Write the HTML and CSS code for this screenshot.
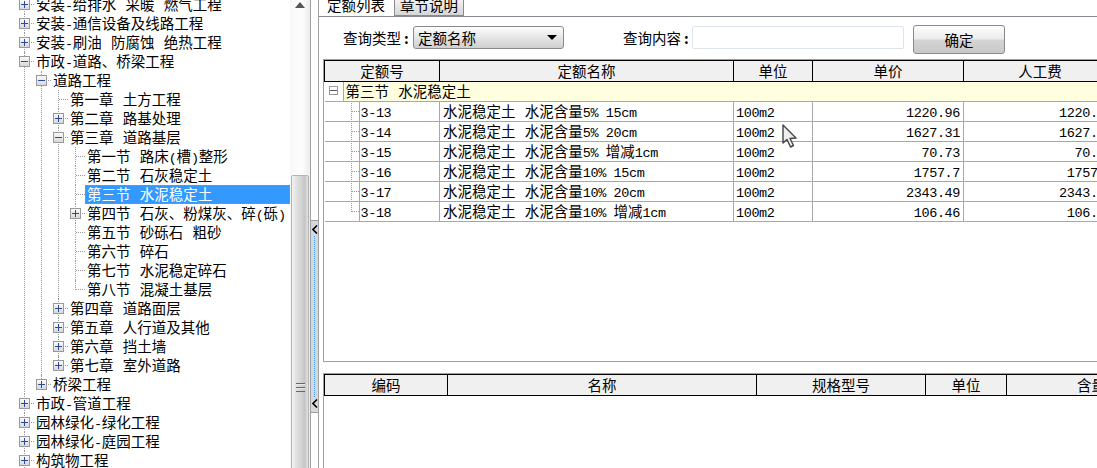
FILE: index.html
```html
<!DOCTYPE html>
<html lang="zh-CN">
<head>
  <meta charset="UTF-8" />
  <meta name="viewport" content="width=device-width, initial-scale=1" />
  <title>定额列表</title>
  <link rel="stylesheet" href="styles.css">
</head>
<body>
<div class="app">

  <!-- left: chapter tree -->
  <div class="tree-pane">
    <ul class="tree">
      <li><span class="exp"></span><div class="row">安装<span class="lat">-</span>给排水 采暖 燃气工程</div></li>
      <li><span class="exp"></span><div class="row">安装<span class="lat">-</span>通信设备及线路工程</div></li>
      <li><span class="exp"></span><div class="row">安装<span class="lat">-</span>刷油 防腐蚀 绝热工程</div></li>
      <li><span class="exp open"></span><div class="row">市政<span class="lat">-</span>道路、桥梁工程</div>
        <ul>
          <li><span class="exp open"></span><div class="row">道路工程</div>
            <ul>
              <li><div class="row">第一章 土方工程</div></li>
              <li><span class="exp"></span><div class="row">第二章 路基处理</div></li>
              <li><span class="exp open"></span><div class="row">第三章 道路基层</div>
                <ul>
                  <li><div class="row">第一节 路床<span class="lat">(</span>槽<span class="lat">)</span>整形</div></li>
                  <li><div class="row">第二节 石灰稳定土</div></li>
                  <li><div class="row selected">第三节 水泥稳定土</div></li>
                  <li><span class="exp"></span><div class="row">第四节 石灰、粉煤灰、碎<span class="lat">(</span>砾<span class="lat">)</span></div></li>
                  <li><div class="row">第五节 砂砾石 粗砂</div></li>
                  <li><div class="row">第六节 碎石</div></li>
                  <li><div class="row">第七节 水泥稳定碎石</div></li>
                  <li class="end"><div class="row">第八节 混凝土基层</div></li>
                </ul>
              </li>
              <li><span class="exp"></span><div class="row">第四章 道路面层</div></li>
              <li><span class="exp"></span><div class="row">第五章 人行道及其他</div></li>
              <li><span class="exp"></span><div class="row">第六章 挡土墙</div></li>
              <li class="end"><span class="exp"></span><div class="row">第七章 室外道路</div></li>
            </ul>
          </li>
          <li class="end"><span class="exp"></span><div class="row">桥梁工程</div></li>
        </ul>
      </li>
      <li><span class="exp"></span><div class="row">市政<span class="lat">-</span>管道工程</div></li>
      <li><span class="exp"></span><div class="row">园林绿化<span class="lat">-</span>绿化工程</div></li>
      <li><span class="exp"></span><div class="row">园林绿化<span class="lat">-</span>庭园工程</div></li>
      <li><span class="exp"></span><div class="row">构筑物工程</div></li>
    </ul>
  </div>

  <div class="scrollbar">
    <div class="scroll-up"></div>
    <div class="scroll-thumb"><div class="grip"></div></div>
  </div>

  <div class="splitter">
    <div class="split-btn">
      <svg class="chevron" width="6" height="9" viewBox="0 0 6 9"><path d="M5 0.5 L1 4.5 L5 8.5" fill="none" stroke="#000" stroke-width="1.6"/></svg>
      <div class="split-dots"></div>
      <svg class="chevron" width="6" height="9" viewBox="0 0 6 9"><path d="M5 0.5 L1 4.5 L5 8.5" fill="none" stroke="#000" stroke-width="1.6"/></svg>
    </div>
  </div>

  <!-- right: query bar and the two grids -->
  <div class="content">
    <div class="tabs">
      <div class="tab active">定额列表</div>
      <div class="tab">章节说明</div>
    </div>

    <div class="query">
      <label class="query-label">查询类型<span class="colon">:</span></label>
      <div class="select">定额名称<span class="select-arrow"></span></div>
      <label class="query-label second">查询内容<span class="colon">:</span></label>
      <input class="query-input" type="text" />
      <button class="query-btn">确定</button>
    </div>

    <div class="grid-box top-grid">
      <table class="grid">
        <colgroup>
          <col class="c-no"><col class="c-name"><col class="c-unit"><col class="c-price"><col class="c-labor">
        </colgroup>
        <thead>
          <tr><th>定额号</th><th>定额名称</th><th>单位</th><th>单价</th><th>人工费</th></tr>
        </thead>
        <tbody>
          <tr class="group">
            <td colspan="5"><span class="group-exp"></span><div class="group-title">第三节 水泥稳定土</div></td>
          </tr>
          <tr>
            <td class="no"><span class="lat">3-13</span></td>
            <td>水泥稳定土 水泥含量<span class="lat">5% 15cm</span></td>
            <td class="unit"><span class="lat">100m2</span></td>
            <td class="num"><span class="lat">1220.96</span></td>
            <td class="num"><span class="lat">1220.96</span></td>
          </tr>
          <tr>
            <td class="no"><span class="lat">3-14</span></td>
            <td>水泥稳定土 水泥含量<span class="lat">5% 20cm</span></td>
            <td class="unit"><span class="lat">100m2</span></td>
            <td class="num"><span class="lat">1627.31</span></td>
            <td class="num"><span class="lat">1627.31</span></td>
          </tr>
          <tr>
            <td class="no"><span class="lat">3-15</span></td>
            <td>水泥稳定土 水泥含量<span class="lat">5% </span>增减<span class="lat">1cm</span></td>
            <td class="unit"><span class="lat">100m2</span></td>
            <td class="num"><span class="lat">70.73</span></td>
            <td class="num"><span class="lat">70.73</span></td>
          </tr>
          <tr>
            <td class="no"><span class="lat">3-16</span></td>
            <td>水泥稳定土 水泥含量<span class="lat">10% 15cm</span></td>
            <td class="unit"><span class="lat">100m2</span></td>
            <td class="num"><span class="lat">1757.7</span></td>
            <td class="num"><span class="lat">1757.7</span></td>
          </tr>
          <tr>
            <td class="no"><span class="lat">3-17</span></td>
            <td>水泥稳定土 水泥含量<span class="lat">10% 20cm</span></td>
            <td class="unit"><span class="lat">100m2</span></td>
            <td class="num"><span class="lat">2343.49</span></td>
            <td class="num"><span class="lat">2343.49</span></td>
          </tr>
          <tr class="last">
            <td class="no"><span class="lat">3-18</span></td>
            <td>水泥稳定土 水泥含量<span class="lat">10% </span>增减<span class="lat">1cm</span></td>
            <td class="unit"><span class="lat">100m2</span></td>
            <td class="num"><span class="lat">106.46</span></td>
            <td class="num"><span class="lat">106.46</span></td>
          </tr>
        </tbody>
      </table>
    </div>

    <div class="grid-box bottom-grid">
      <table class="grid">
        <colgroup>
          <col class="d-code"><col class="d-name"><col class="d-spec"><col class="d-unit"><col class="d-qty">
        </colgroup>
        <thead>
          <tr><th>编码</th><th>名称</th><th>规格型号</th><th>单位</th><th>含量</th></tr>
        </thead>
      </table>
    </div>

    <!-- mouse pointer caught in the capture -->
    <svg class="pointer" width="16" height="25" viewBox="0 0 16 25">
      <path d="M1 1 L1 19 L5 15.5 L8.5 23 L11.5 21.5 L8 14.5 L14 14 Z" fill="#eee" stroke="#444" stroke-width="1.4" stroke-linejoin="round"/>
    </svg>
  </div>
</div>
</body>
</html>
```
FILE: styles.css
```css
* {
  box-sizing: border-box;
}
html, body {
  margin: 0;
  height: 100%;
  overflow: hidden;
  background: #fff;
}
body {
  font-family: "Noto Sans CJK SC", "Liberation Sans", sans-serif;
  font-size: 14.5px;
  word-spacing: 6px;
  color: #000;
}
.app {
  display: flex;
  height: 468px;
}
/* half-width latin runs, same advance as the simsun style grid */
.lat {
  font-family: "Liberation Mono", monospace;
  font-size: 13.5px;
  line-height: 1;
  letter-spacing: -0.4px;
  word-spacing: 0;
}

/* tree */
.tree-pane {
  width: 290px;
  flex: none;
  overflow: hidden;
}
.tree, .tree ul {
  list-style: none;
  margin: 0;
  padding: 0;
}
.tree {
  margin: -5px 0 0 17px;
}
.tree li {
  position: relative;
  padding-left: 17px;
}
.tree li::before {
  content: "";
  position: absolute;
  left: 7px;
  top: 0;
  height: 100%;
  border-left: 1px dotted #999;
}
.tree li.end::before {
  height: 10px;
}
.tree li::after {
  content: "";
  position: absolute;
  left: 8px;
  top: 9px;
  width: 9px;
  border-top: 1px dotted #999;
}
.row {
  height: 19px;
  line-height: 18px;
  padding-left: 2px;
  white-space: nowrap;
}
.row.selected {
  background: #3399ff;
  color: #fff;
  outline: 1px dotted #c68a3a;
  outline-offset: -1px;
}
.exp {
  position: absolute;
  z-index: 1;
  left: 2px;
  top: 4px;
  width: 11px;
  height: 11px;
  border: 1px solid #999;
  background: linear-gradient(#fafafa, #d8d8d8);
}
.exp::before, .exp::after {
  content: "";
  position: absolute;
  background: #2b4a9b;
}
.exp::before {
  left: 1px;
  top: 4px;
  width: 7px;
  height: 1px;
}
.exp::after {
  left: 4px;
  top: 1px;
  width: 1px;
  height: 7px;
}
.exp.open::after {
  display: none;
}

/* scrollbar */
.scrollbar {
  width: 20px;
  flex: none;
  overflow: hidden;
  background: linear-gradient(to right, #f8f8f8, #fdfdfd 60%, #ececec);
}
.scroll-up {
  width: 0;
  height: 0;
  margin: 2px 0 0 5px;
  border: 5px solid transparent;
  border-top: 0;
  border-bottom: 6px solid #555;
}
.scroll-thumb {
  width: 18px;
  height: 424px;
  margin: 167px 0 0 1px;
  display: flex;
  align-items: center;
  justify-content: center;
  border: 1px solid #b4b4b4;
  border-radius: 2px;
  background: linear-gradient(to right, #f4f4f4, #e2e2e2 25%, #d0d0d0 65%, #c4c4c4 80%, #e4e4e4);
}
.grip {
  width: 9px;
  height: 9px;
  background: repeating-linear-gradient(#666 0 1px, #e8e8e8 1px 2px, transparent 2px 4px);
}

/* splitter */
.splitter {
  width: 9px;
  flex: none;
  border-left: 1px solid #a0a0a0;
  border-right: 1px solid #a0a0a0;
  padding-top: 220px;
}
.split-btn {
  height: 193px;
  display: flex;
  flex-direction: column;
  align-items: center;
  padding: 4px 0;
  background: #d6d8dc;
  border-top: 1px solid #a0a0a0;
  border-bottom: 1px solid #a0a0a0;
}
.chevron {
  flex: none;
}
.split-dots {
  flex: 1;
  margin: 2px 0;
  border-left: 1px dotted #3f9bff;
}

/* right side */
.content {
  flex: 1;
  min-width: 0;
  position: relative;
  overflow: hidden;
  padding-left: 4px;
}
.tabs {
  display: flex;
  height: 17px;
  margin-left: -4px;
  padding-left: 4px;
  border-bottom: 1px solid #8a8a92;
}
.tab {
  height: 16px;
  line-height: 10px;
  padding: 0 4px;
  width: 70px;
  text-align: center;
}
.tab.active {
  width: 66px;
  margin-right: 5px;
}
.tab:not(.active) {
  background: linear-gradient(#f2f2f2, #d6d6d6);
  border: 1px solid #8a8a92;
  border-top: 0;
}
.query {
  display: flex;
  align-items: flex-start;
  height: 42px;
  padding: 9px 0 0 20px;
}
.query-label {
  width: 70px;
  line-height: 24px;
  white-space: nowrap;
}
.query-label.second {
  width: 70px;
  margin-left: 59px;
  margin-right: -1px;
}
.colon {
  margin-left: 3px;
  font-weight: bold;
}
.select {
  width: 151px;
  height: 23px;
  line-height: 21px;
  padding-left: 4px;
  position: relative;
  border: 1px solid #8a8a8a;
  border-radius: 3px;
  background: linear-gradient(#fdfdfd, #e6e6e6 50%, #cfcfcf);
}
.select-arrow {
  position: absolute;
  right: 6px;
  top: 8px;
  border: 5px solid transparent;
  border-top: 5px solid #000;
  border-bottom: 0;
}
.query-input {
  width: 212px;
  height: 23px;
  margin: 0;
  border: 1px solid #dde4ee;
  border-radius: 2px;
  background: #fff;
}
.query-btn {
  width: 92px;
  height: 29px;
  margin: -1px 0 0 9px;
  padding: 0;
  font: inherit;
  color: #000;
  border: 1px solid #8a8a8a;
  border-radius: 3px;
  background: linear-gradient(#fdfdfd, #ececec 48%, #d4d4d4 52%, #c8c8c8);
}

/* grids */
.grid-box {
  overflow: hidden;
  border-left: 1px solid #a0a0a0;
}
.top-grid {
  height: 303px;
  border-bottom: 1px solid #a0a0a0;
  border-top: 1px solid #a0a0a0;
}
.bottom-grid {
  height: 96px;
  margin-top: 11px;
  border-top: 1px solid #a0a0a0;
}
.grid {
  border-collapse: collapse;
  table-layout: fixed;
}
.top-grid .grid { width: 792px; }
.bottom-grid .grid { width: 852px; }
.c-no { width: 115px; }
.c-name { width: 294px; }
.c-unit { width: 79px; }
.c-price { width: 151px; }
.c-labor { width: 153px; }
.d-code { width: 123px; }
.d-name { width: 309px; }
.d-spec { width: 169px; }
.d-unit { width: 81px; }
.d-qty { width: 170px; }

.grid th {
  height: 21px;
  padding: 0;
  font-weight: normal;
  line-height: 16px;
  background: #f0f0f0;
  border: 1px solid #000;
}
.grid td {
  height: 20px;
  padding: 0 3px;
  line-height: 16px;
  white-space: nowrap;
  border-right: 1px solid #a8a8a8;
  border-bottom: 1px solid #a8a8a8;
}
.grid td.unit {
  padding-left: 2px;
}
.grid td.no {
  position: relative;
  padding-left: 36px;
  background: linear-gradient(to right, #fff 34px, #a8a8a8 34px, #a8a8a8 35px, transparent 35px);
}
/* connector from the group node to each row */
.grid td.no::before {
  content: "";
  position: absolute;
  left: 26px;
  top: -1px;
  height: 21px;
  border-left: 1px dotted #999;
}
.grid td.no::after {
  content: "";
  position: absolute;
  left: 27px;
  top: 9px;
  width: 7px;
  border-top: 1px dotted #999;
}
.grid tr.last td.no::before {
  height: 11px;
}
.grid td.num {
  text-align: right;
}
.grid tr.group td {
  position: relative;
  height: 20px;
  padding: 0 0 0 18px;
  border-right: 0;
}
.group-title {
  height: 19px;
  line-height: 18px;
  padding-left: 2px;
  background: #ffffe0;
  border-left: 1px solid #a8a8a8;
}
.group-exp {
  position: absolute;
  left: 4px;
  top: 4px;
  width: 9px;
  height: 9px;
  border: 1px solid #999;
  background: linear-gradient(#fff 3px, #555 3px, #555 4px, #fff 4px);
}
.pointer {
  position: absolute;
  left: 463px;
  top: 124px;
}
```
